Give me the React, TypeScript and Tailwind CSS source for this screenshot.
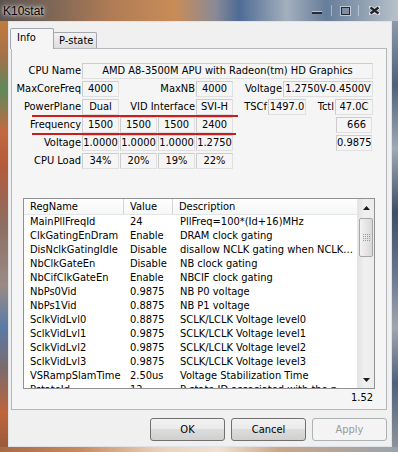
import React from "react";

const ui = "font-['DejaVu_Sans_Condensed','DejaVu_Sans',sans-serif] text-[11px] text-black";

// one sunken static box of the Info page
function Field({ w, children, right }: { w: string; children?: React.ReactNode; right?: boolean }) {
  return (
    <div
      className={`${w} h-[16px] shrink-0 border border-[#e0e0e0] border-t-[#cdcdcd] border-l-[#cdcdcd] leading-[14px] whitespace-nowrap overflow-hidden ${
        right ? "text-right pr-[5px]" : "text-center"
      }`}
    >
      {children}
    </div>
  );
}

function Label({ w, children }: { w: string; children: React.ReactNode }) {
  return <div className={`${w} h-[16px] shrink-0 text-right pr-[1px] leading-[15px] whitespace-nowrap`}>{children}</div>;
}

const regs = [
  ["MainPllFreqId", "24", "PllFreq=100*(Id+16)MHz"],
  ["ClkGatingEnDram", "Enable", "DRAM clock gating"],
  ["DisNclkGatingIdle", "Disable", "disallow NCLK gating when NCLK..."],
  ["NbClkGateEn", "Disable", "NB clock gating"],
  ["NbCifClkGateEn", "Enable", "NBCIF clock gating"],
  ["NbPs0Vid", "0.9875", "NB P0 voltage"],
  ["NbPs1Vid", "0.8875", "NB P1 voltage"],
  ["SclkVidLvl0", "0.8875", "SCLK/LCLK Voltage level0"],
  ["SclkVidLvl1", "0.9875", "SCLK/LCLK Voltage level1"],
  ["SclkVidLvl2", "0.9875", "SCLK/LCLK Voltage level2"],
  ["SclkVidLvl3", "0.9875", "SCLK/LCLK Voltage level3"],
  ["VSRampSlamTime", "2.50us", "Voltage Stabilization Time"],
  ["PstateId", "12", "P-state ID associated with the p..."],
];

function Quad({ label, vals, last, lastRight }: { label: string; vals: string[]; last?: string; lastRight?: boolean }) {
  return (
    <div className="flex">
      <Label w="w-[70px]">{label}</Label>
      <div className="flex gap-[1px]">
        {vals.map((v, i) => (
          <Field key={i} w="w-[37px]">
            {v}
          </Field>
        ))}
      </div>
      <div className="w-[103px] shrink-0" />
      {last !== undefined && (
        <Field w="w-[36px]" right={lastRight}>
          {last}
        </Field>
      )}
    </div>
  );
}

function Arrow({ up }: { up?: boolean }) {
  return (
    <svg width="7" height="4" viewBox="0 0 7 4">
      <path d={up ? "M0 4 L3.5 0 L7 4 Z" : "M0 0 L3.5 4 L7 0 Z"} fill="#1a1a1a" />
    </svg>
  );
}

export default function App() {
  return (
    <div className={`w-[398px] h-[452px] flex flex-col overflow-hidden ${ui}`}>
      {/* glass title bar */}
      <div className="h-[21px] shrink-0 flex items-center px-[3px] bg-[linear-gradient(90deg,#5b524f_0%,#7a6556_12%,#b07c55_28%,#c98c57_44%,#8a8a95_54%,#4e6b94_60%,#a3afbd_72%,#667d9a_82%,#b8c1ca_100%)]">
        <span className="font-['Liberation_Sans',sans-serif] text-[12px] text-black [text-shadow:0_0_6px_#fff,0_0_3px_#fff]">K10stat</span>
        <div className="ml-auto flex items-center h-full">
          <div className="w-[10px] h-[3px] bg-[#2a2a2a] border-t border-white/70 mr-[9px] mt-[3px]" />
          <div className="w-[1px] h-[11px] bg-white/40 mr-[9px]" />
          <div className="w-[9px] h-[8px] border border-[#2a2a2a] outline outline-1 outline-white/50 mr-[8px]" />
          <div className="w-[1px] h-[11px] bg-white/40 mr-[10px]" />
          <svg width="11" height="9" viewBox="0 0 11 9" className="mr-[15px]">
            <path d="M1 1 L10 8 M10 1 L1 8" stroke="#fff" strokeWidth="4" strokeLinecap="round" opacity="0.6" />
            <path d="M1.5 1.5 L9.5 7.5 M9.5 1.5 L1.5 7.5" stroke="#222" strokeWidth="2.2" />
          </svg>
        </div>
      </div>

      <div className="flex flex-1 min-h-0">
        <div className="w-[8px] shrink-0 bg-[linear-gradient(180deg,#c27a3c_0%,#a67048_8%,#5d8a5b_16%,#c4693f_26%,#b35a3a_34%,#8d6e62_48%,#9a8b86_62%,#5a7aa6_72%,#7d6a6a_82%,#c0643a_92%,#9b5a3a_100%)]" />

        {/* client area */}
        <div className="w-[384px] shrink-0 border border-[#dfe3e8] bg-[#f0f0f0] pl-[2px] pr-[4px] flex flex-col">
          {/* tabs */}
          <div className="h-[26px] flex items-end ml-[-1px]">
            <div className="relative z-10 w-[44px] h-[21px] mb-[-1px] bg-[#f5f5f5] border border-b-0 border-[#a4a8ae] rounded-t-[2px] pl-[6px] pt-[2px] leading-[14px]">
              Info
            </div>
            <div className="w-[44px] h-[16px] ml-[-1px] bg-[linear-gradient(180deg,#f2f2f2,#dedede)] border border-b-0 border-[#a4a8ae] rounded-t-[2px] pl-[5px] leading-[15px]">
              P-state
            </div>
          </div>

          {/* tab page */}
          <div className="relative h-[362px] border border-[#b4b7bc] bg-[#f5f5f5] pt-[14px] flex flex-col">
            <div className="flex flex-col gap-[2px]">
              <div className="flex">
                <Label w="w-[70px]">CPU Name</Label>
                <Field w="w-[291px]">AMD A8-3500M APU with Radeon(tm) HD Graphics</Field>
              </div>
              <div className="flex">
                <Label w="w-[70px]">MaxCoreFreq</Label>
                <Field w="w-[37px]">4000</Field>
                <Label w="w-[77px]">MaxNB</Label>
                <Field w="w-[37px]">4000</Field>
                <Label w="w-[50px]">Voltage</Label>
                <Field w="w-[90px]">1.2750V-0.4500V</Field>
              </div>
              <div className="flex">
                <Label w="w-[70px]">PowerPlane</Label>
                <Field w="w-[37px]">Dual</Field>
                <Label w="w-[77px]">VID Interface</Label>
                <Field w="w-[37px]">SVI-H</Field>
                <Label w="w-[35px]">TSCf</Label>
                <Field w="w-[38px]">1497.0</Field>
                <Label w="w-[29px]">Tctl</Label>
                <Field w="w-[38px]">47.0C</Field>
              </div>
              <Quad label="Frequency" vals={["1500", "1500", "1500", "2400"]} last="666" lastRight />
              <Quad label="Voltage" vals={["1.0000", "1.0000", "1.0000", "1.2750"]} last="0.9875" />
              <Quad label="CPU Load" vals={["34%", "20%", "19%", "22%"]} />
            </div>

            {/* hand-drawn red marks */}
            <div className="absolute left-[20px] top-[66px] w-[206px] h-[2px] bg-[#c81f1e]" />
            <div className="absolute left-[20px] top-[84px] w-[204px] h-[2px] bg-[#c81f1e]" />

            {/* register list */}
            <div className="mt-[29px] ml-[11px] w-[352px] h-[191px] border border-[#8f9196] bg-white flex">
              <div className="w-[333px] flex flex-col overflow-hidden">
                <div className="h-[16px] shrink-0 flex border-b border-[#e3e5e8] bg-[linear-gradient(180deg,#ffffff,#f5f6f7)] leading-[15px]">
                  <div className="w-[100px] pl-[6px] border-r border-[#d5d5d5]">RegName</div>
                  <div className="w-[49px] pl-[6px] border-r border-[#d5d5d5]">Value</div>
                  <div className="flex-1 pl-[6px]">Description</div>
                </div>
                <div className="flex-1 overflow-hidden">
                  {regs.map((r) => (
                    <div key={r[0]} className="h-[14px] flex leading-[14px] whitespace-nowrap">
                      <div className="w-[100px] pl-[6px]">{r[0]}</div>
                      <div className="w-[49px] pl-[6px]">{r[1]}</div>
                      <div className="flex-1 pl-[7px] overflow-hidden">{r[2]}</div>
                    </div>
                  ))}
                </div>
              </div>
              {/* scrollbar */}
              <div className="w-[17px] flex flex-col bg-[linear-gradient(90deg,#e3e3e3,#f0f0f0_40%,#ececec)] border-l border-[#e6e6e6]">
                <div className="h-[17px] flex items-center justify-center">
                  <Arrow up />
                </div>
                <div className="mt-[2px] mx-[1px] h-[39px] rounded-[2px] border border-[#a6a6a6] bg-[linear-gradient(90deg,#f3f3f3,#e6e6e6_50%,#d8d8d8)] flex flex-col items-center justify-center gap-[1px]">
                  <div className="w-[7px] h-[1px] border-t border-dotted border-[#9a9a9a]" />
                  <div className="w-[7px] h-[1px] border-t border-dotted border-[#9a9a9a]" />
                  <div className="w-[7px] h-[1px] border-t border-dotted border-[#9a9a9a]" />
                  <div className="w-[7px] h-[1px] border-t border-dotted border-[#9a9a9a]" />
                </div>
                <div className="flex-1" />
                <div className="h-[17px] flex items-center justify-center">
                  <Arrow />
                </div>
              </div>
            </div>

            <div className="h-[14px] mt-[2px] pr-[13px] text-right leading-[14px]">1.52</div>
          </div>

          {/* dialog buttons */}
          <div className="mt-[8px] flex justify-end gap-[6px]">
            <button className="w-[75px] h-[23px] rounded-[3px] border border-[#707070] bg-[linear-gradient(180deg,#f2f2f2_0%,#ebebeb_45%,#dddddd_50%,#cfcfcf_100%)] text-[11px] leading-[20px]">
              OK
            </button>
            <button className="w-[75px] h-[23px] rounded-[3px] border border-[#707070] bg-[linear-gradient(180deg,#f2f2f2_0%,#ebebeb_45%,#dddddd_50%,#cfcfcf_100%)] text-[11px] leading-[20px]">
              Cancel
            </button>
            <button className="w-[75px] h-[23px] rounded-[3px] border border-[#adb2b5] bg-[#f4f4f4] text-[11px] leading-[20px] text-[#9a9a9a]">
              Apply
            </button>
          </div>
        </div>

        <div className="w-[6px] shrink-0 bg-[linear-gradient(180deg,#8c9aab_0%,#4f607a_15%,#9fa9b4_30%,#3e4e66_45%,#6a7890_60%,#a0a6ae_72%,#50607a_85%,#8d939b_100%)]" />
      </div>

      <div className="h-[5px] shrink-0 bg-[linear-gradient(90deg,#a86a45_0%,#c78a5f_20%,#e8d2bd_40%,#f0e2d2_55%,#c9a78a_70%,#9aa3ad_100%)]" />
    </div>
  );
}
